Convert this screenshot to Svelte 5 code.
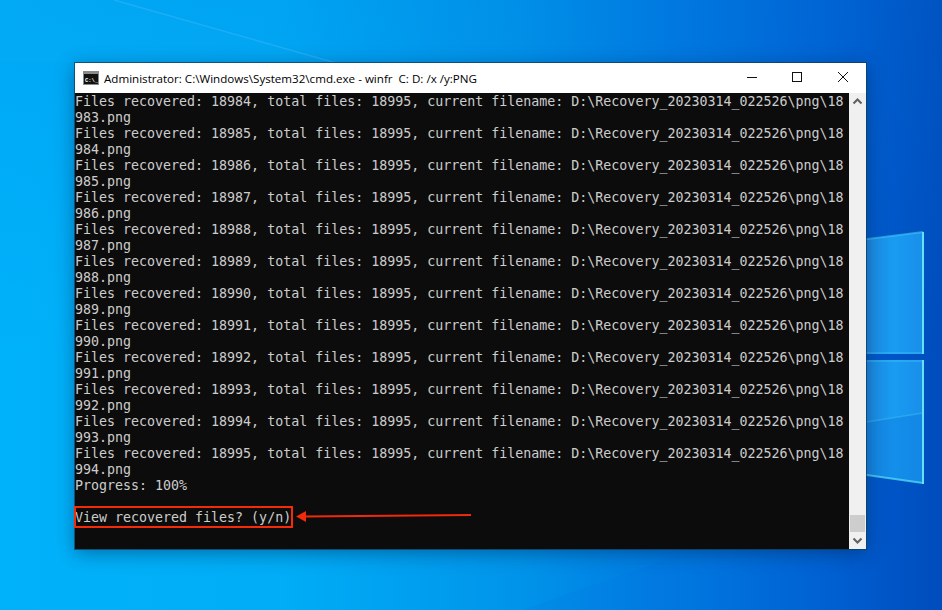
<script>
    const first = 18984
    const total = 18995
    const dir = "D:\\Recovery_20230314_022526\\png\\"

    let lines = []
    for (let n = first; n <= total; n++) {
        lines.push(`Files recovered: ${n}, total files: ${total}, current filename: ${dir}18`)
        lines.push(`${String(n - 1).slice(2)}.png`)
    }
    lines.push("Progress: 100%")
    lines.push(" ")
    lines.push("View recovered files? (y/n)")
</script>

<div class="desktop">
    <svg class="wallpaper" width="942" height="610" viewBox="0 0 942 610">
        <defs>
            <linearGradient id="pane" x1="0" y1="0" x2="1" y2="0">
                <stop offset="0" stop-color="#1f86de" />
                <stop offset="0.55" stop-color="#189cf2" />
                <stop offset="1" stop-color="#1a8eea" />
            </linearGradient>
        </defs>
        <polygon points="114,0 336,62 0,62 0,0" fill="#2ab8ff" opacity="0.06" />
        <line x1="114" y1="0" x2="336" y2="63" stroke="#35b4fa" stroke-width="1.5" opacity="0.55" />
        <polygon points="522,610 680,555 680,610" fill="#0a6fdc" opacity="0.12" />
        <polygon points="860,240 923,232 923,354 860,354" fill="url(#pane)" />
        <polygon points="860,360 923,360 923,483 860,474" fill="url(#pane)" />
        <polygon points="860,423 923,413 923,483 860,474" fill="#0d7fe0" opacity="0.45" />
        <polyline points="860,240 923,232" fill="none" stroke="#45c6f5" stroke-width="2" opacity="0.6" />
        <polyline points="860,353 923,353" fill="none" stroke="#45c6f5" stroke-width="1.5" opacity="0.5" />
        <polyline points="860,361 923,361" fill="none" stroke="#45c6f5" stroke-width="1.5" opacity="0.5" />
        <polyline points="860,423 923,413" fill="none" stroke="#45c6f5" stroke-width="1.5" opacity="0.4" />
        <polyline points="860,474 923,483" fill="none" stroke="#4fd6f5" stroke-width="2" opacity="0.8" />
        <line x1="923" y1="232" x2="923" y2="354" stroke="#62e2f4" stroke-width="2" />
        <line x1="923" y1="360" x2="923" y2="484" stroke="#62e2f4" stroke-width="2" />
    </svg>

    <div class="window">
        <div class="titlebar">
            <svg class="app-icon" width="16" height="14" viewBox="0 0 16 14">
                <rect width="16" height="14" fill="#8a8a8a" />
                <rect x="1" y="3" width="14" height="10" fill="#111" />
                <text x="2" y="10.5" class="icon-text">C:\_</text>
            </svg>
            <span class="title">Administrator: C:\Windows\System32\cmd.exe - winfr&nbsp; C: D: /x /y:PNG</span>
            <div class="controls">
                <svg width="46" height="30" viewBox="0 0 46 30">
                    <line x1="19" y1="14.5" x2="29" y2="14.5" stroke="#111" />
                </svg>
                <svg width="46" height="30" viewBox="0 0 46 30">
                    <rect x="18.5" y="9.5" width="9" height="9" fill="none" stroke="#111" />
                </svg>
                <svg width="46" height="30" viewBox="0 0 46 30">
                    <path d="M18 9 L28 19 M28 9 L18 19" stroke="#111" fill="none" />
                </svg>
            </div>
        </div>

        <div class="body">
            <div class="console">
                {#each lines as line}
                    <div class="line">{line}</div>
                {/each}
                <div class="line"><span class="cursor"></span></div>
            </div>
            <div class="scrollbar">
                <svg width="17" height="17" viewBox="0 0 17 17">
                    <path d="M4.5 10.5 L8.5 6.5 L12.5 10.5" fill="none" stroke="#606060" stroke-width="2" />
                </svg>
                <div class="track">
                    <div class="thumb"></div>
                </div>
                <svg width="17" height="17" viewBox="0 0 17 17">
                    <path d="M4.5 6.5 L8.5 10.5 L12.5 6.5" fill="none" stroke="#606060" stroke-width="2" />
                </svg>
            </div>
        </div>

        <div class="highlight"></div>
        <svg class="arrow" width="180" height="14" viewBox="0 0 180 14">
            <path d="M10 7.5 L176 6" stroke="#f02a0a" stroke-width="2" fill="none" />
            <path d="M1 7.5 L11 2 L11 13 Z" fill="#f02a0a" />
        </svg>
    </div>
</div>

<style>
    :global(body) {
        margin: 0;
    }

    .desktop {
        position: relative;
        width: 942px;
        height: 610px;
        overflow: hidden;
        padding: 63px 0 0 75px;
        box-sizing: border-box;
        background:
            linear-gradient(180deg, rgba(0, 120, 220, 0.18), rgba(0, 180, 255, 0) 60%),
            linear-gradient(90deg, #00b2fa 0%, #00adf6 30%, #0094ea 55%, #0078e0 72%, #0060d2 88%, #004cbc 100%);
    }

    .wallpaper {
        position: absolute;
        left: 0;
        top: 0;
    }

    .window {
        position: relative;
        width: 791px;
        height: 486px;
        display: flex;
        flex-direction: column;
        background: #fff;
        outline: 1px solid rgba(20, 60, 90, 0.75);
        box-shadow: 0 4px 18px rgba(0, 30, 70, 0.45);
    }

    .titlebar {
        height: 30px;
        display: flex;
        align-items: center;
        padding-left: 8px;
        background: #fff;
    }

    .app-icon {
        flex: none;
        margin-right: 5px;
    }

    .icon-text {
        font-family: "Liberation Mono", monospace;
        font-size: 5.5px;
        font-weight: bold;
        fill: #fff;
    }

    .title {
        font-family: "Open Sans", sans-serif;
        font-size: 11.6px;
        color: #000;
        white-space: nowrap;
        flex: 1;
    }

    .controls {
        display: flex;
        flex: none;
    }

    .body {
        flex: 1;
        display: flex;
        min-height: 0;
    }

    .console {
        flex: 1;
        padding-top: 1px;
        background: #0c0c0c;
        color: #cccccc;
        font-family: "DejaVu Sans Mono", monospace;
        font-size: 13.3px;
        line-height: 16px;
        white-space: pre;
        overflow: hidden;
    }

    .line {
        height: 16px;
    }

    .cursor {
        display: inline-block;
        width: 8px;
        height: 4px;
        background: #f2f2f2;
        vertical-align: -2px;
    }

    .scrollbar {
        width: 17px;
        flex: none;
        display: flex;
        flex-direction: column;
        background: #f0f0f0;
    }

    .track {
        flex: 1;
        display: flex;
        flex-direction: column;
        justify-content: flex-end;
        align-items: center;
    }

    .thumb {
        width: 15px;
        height: 17px;
        background: #cdcdcd;
    }

    .highlight {
        position: absolute;
        left: -1px;
        top: 443px;
        width: 215px;
        height: 18px;
        border: 2px solid #f52a08;
    }

    .arrow {
        position: absolute;
        left: 220px;
        top: 446px;
    }
</style>
